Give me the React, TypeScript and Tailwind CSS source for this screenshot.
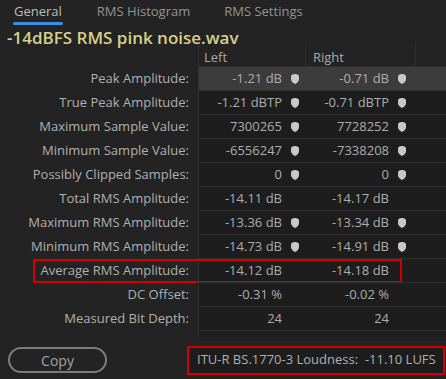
import React from "react";

const Marker = () => (
  <svg width="8" height="10" viewBox="0 0 8 10" className="shrink-0">
    <path d="M0 2.5 Q0 0 4 0 Q8 0 8 2.5 L8 5 Q8 8 4 10 Q0 8 0 5 Z" fill="#c9c9c9" />
  </svg>
);

type Row = { label: string; l: string; r: string; m: boolean; hi?: boolean; box?: boolean };

const rows: Row[] = [
  { label: "Peak Amplitude:", l: "-1.21 dB", r: "-0.71 dB", m: true, hi: true },
  { label: "True Peak Amplitude:", l: "-1.21 dBTP", r: "-0.71 dBTP", m: true },
  { label: "Maximum Sample Value:", l: "7300265", r: "7728252", m: true },
  { label: "Minimum Sample Value:", l: "-6556247", r: "-7338208", m: true },
  { label: "Possibly Clipped Samples:", l: "0", r: "0", m: true },
  { label: "Total RMS Amplitude:", l: "-14.11 dB", r: "-14.17 dB", m: false },
  { label: "Maximum RMS Amplitude:", l: "-13.36 dB", r: "-13.34 dB", m: true },
  { label: "Minimum RMS Amplitude:", l: "-14.73 dB", r: "-14.91 dB", m: true },
  { label: "Average RMS Amplitude:", l: "-14.12 dB", r: "-14.18 dB", m: false, box: true },
  { label: "DC Offset:", l: "-0.31 %", r: "-0.02 %", m: false },
  { label: "Measured Bit Depth:", l: "24", r: "24", m: false },
  { label: "Dynamic Range:", l: "", r: "", m: false },
];

export default function App() {
  return (
    <div
      className="w-[446px] h-[379px] bg-[#232323] flex flex-col overflow-hidden text-[13px] text-[#adadad]"
      style={{ fontFamily: '"Open Sans", "Noto Sans", sans-serif' }}
    >
      {/* Tabs */}
      <div className="h-[26px] flex items-start pl-[13px] gap-[34px] shrink-0">
        <div className="flex flex-col">
          <span className="text-[13px] leading-[22px] text-[#bdbdbd] px-[1px]">General</span>
          <div className="h-[3px] bg-[#3b8fe0] rounded-full" />
        </div>
        <span className="text-[13px] leading-[22px] text-[#949494]">RMS Histogram</span>
        <span className="text-[13px] leading-[22px] text-[#949494]">RMS Settings</span>
      </div>
      {/* Title */}
      <div className="h-[18px] shrink-0 relative">
        <span className="absolute left-[7px] top-[2px] text-[17px] leading-[19px] font-semibold text-[#d6d08a] whitespace-nowrap">
          -14dBFS RMS pink noise.wav
        </span>
      </div>
      {/* Table area */}
      <div className="h-[293px] shrink-0 overflow-hidden flex flex-col">
        <div className="h-[22px] flex shrink-0">
          <div className="w-[198px]" />
          <div className="w-[107px] pl-[5px] pt-[2px] leading-[22px] text-[#a9a9a9] border-l border-[#2e2e2e]">Left</div>
          <div className="w-[110px] pl-[7px] pt-[2px] leading-[22px] text-[#a9a9a9] border-l border-[#2e2e2e]">Right</div>
          <div className="flex-1 border-l border-[#2e2e2e]" />
        </div>
        {rows.map((r, i) => (
          <div key={i} className="h-[24px] flex shrink-0 relative">
            <div className="w-[198px] pr-[9px] text-right leading-[24px] text-[#b0b0b0] whitespace-nowrap">{r.label}</div>
            <div
              className={`flex-1 flex border-t border-l border-[#303030] ${r.hi ? "bg-[#3c3c3c]" : "bg-[#1d1d1d]"}`}
            >
              <div className="w-[106px] flex items-center justify-end pr-[6px] gap-[9px]">
                <span className="leading-[23px]">{r.l}</span>
                <span className={r.m ? "" : "invisible"}>
                  <Marker />
                </span>
              </div>
              <div className="w-[110px] flex items-center justify-end pr-[9px] gap-[9px]">
                <span className="leading-[23px]">{r.r}</span>
                <span className={r.m ? "" : "invisible"}>
                  <Marker />
                </span>
              </div>
            </div>
            {r.box && (
              <div className="absolute left-[33px] right-[44px] top-[1px] bottom-[-1px] border-2 border-[#d40000] pointer-events-none" />
            )}
          </div>
        ))}
      </div>
      {/* Bottom bar */}
      <div className="flex-1 flex items-center pl-[8px] pr-[1px] justify-between pt-[4px]">
        <div className="w-[99px] h-[26px] rounded-full border-2 border-[#7c7c7c] flex items-center justify-center text-[14px] text-[#a3a3a3]">
          Copy
        </div>
        <div className="w-[258px] h-[29px] border-2 border-[#d40000] bg-[#1d1d1d] flex items-center pl-[8px] text-[13px] text-[#b0b0b0] whitespace-pre">
          {"ITU-R BS.1770-3 Loudness:  -11.10 LUFS"}
        </div>
      </div>
    </div>
  );
}
